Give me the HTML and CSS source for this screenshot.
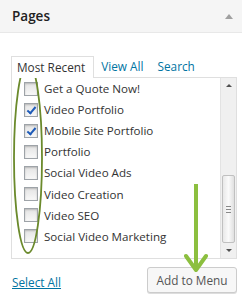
FILE: index.html
```html
<!DOCTYPE html>
<html>
<head>
<meta charset="UTF-8">
<title>Pages</title>
<link rel="stylesheet" href="styles.css">
</head>
<body>
<div class="widget">
  <div class="widget-top">
    <h3>Pages</h3>
    <span class="toggle"></span>
  </div>
  <div class="widget-inside">
    <ul class="tabs">
      <li class="tab active">Most Recent</li>
      <li class="tab"><a href="#">View All</a></li>
      <li class="tab"><a href="#">Search</a></li>
    </ul>
    <div class="panel">
      <ul class="checklist">
        <li><span class="box"></span>Get a Quote Now!</li>
        <li><span class="box checked"></span>Video Portfolio</li>
        <li><span class="box checked"></span>Mobile Site Portfolio</li>
        <li><span class="box"></span>Portfolio</li>
        <li><span class="box"></span>Social Video Ads</li>
        <li><span class="box"></span>Video Creation</li>
        <li><span class="box"></span>Video SEO</li>
        <li><span class="box"></span>Social Video Marketing</li>
      </ul>
      <div class="scrollbar">
        <span class="arrow up"></span>
        <div class="track"><div class="thumb"><span class="grip"></span></div></div>
        <span class="arrow down"></span>
      </div>
    </div>
    <div class="actions">
      <a href="#" class="select-all">Select All</a>
      <button class="add-btn">Add to Menu</button>
    </div>
  </div>

  <!-- annotations drawn over the screenshot -->
  <svg class="mark-ellipse" width="32" height="194" viewBox="0 0 32 194">
    <ellipse cx="16" cy="97" rx="14" ry="95" fill="none" stroke="#6b8a2c" stroke-width="1.8"/>
  </svg>
  <svg class="mark-arrow" width="24" height="92" viewBox="0 0 24 92">
    <line x1="12" y1="0" x2="12" y2="84" stroke="#8cbf3f" stroke-width="4"/>
    <polyline points="2,72 12,86 22,72" fill="none" stroke="#8cbf3f" stroke-width="4" stroke-linejoin="round" stroke-linecap="round"/>
  </svg>
</div>
</body>
</html>
```
FILE: styles.css
```css
body {
  margin: 0;
  font-family: "Open Sans", "Liberation Sans", sans-serif;
  color: #333;
  background-color: #fff;
}
.widget {
  position: relative;
  width: 242px;
  height: 301px;
  overflow: hidden;
}
.widget-top {
  height: 32px;
  background-color: #f5f5f5;
  border-bottom: 1px solid #e8e8e8;
  display: flex;
  align-items: center;
  justify-content: space-between;
  padding: 0 9px 0 12px;
}
.widget-top h3 {
  margin: 0;
  font-size: 13.5px;
  font-weight: 600;
  color: #222;
}
.toggle {
  width: 0;
  height: 0;
  border-left: 4px solid transparent;
  border-right: 4px solid transparent;
  border-bottom: 5px solid #a0a0a0;
}
.widget-inside {
  padding: 23px 5px 0 11px;
}
.tabs {
  list-style: none;
  margin: 0;
  padding: 0;
  display: flex;
  font-size: 11.8px;
  height: 21px;
}
.tab {
  padding: 1px 7px 0 7px;
  line-height: 19px;
}
.tab a {
  color: #0074a2;
  text-decoration: none;
}
.tab.active {
  border: 1px solid #dfdfdf;
  border-bottom: none;
  background-color: #fff;
  position: relative;
  z-index: 1;
  margin-bottom: -1px;
  height: 20px;
  padding: 1px 8px 0 5px;
}
.panel {
  border: 1px solid #dfdfdf;
  height: 180px;
  display: flex;
}
.checklist {
  list-style: none;
  margin: 0;
  padding: 0 0 0 12px;
  flex: 1;
  font-size: 11.6px;
}
.checklist li {
  height: 21.1px;
  display: flex;
  align-items: center;
  white-space: nowrap;
}
.box {
  box-sizing: border-box;
  width: 14px;
  height: 14px;
  border: 1px solid #9ea3a8;
  background: linear-gradient(#e4e4e4, #f8f8f8);
  box-shadow: inset 0 1px 2px rgba(0,0,0,0.2);
  margin-right: 6px;
  position: relative;
  flex-shrink: 0;
}
.box.checked::after {
  content: "";
  position: absolute;
  left: 4px;
  top: 1px;
  width: 3px;
  height: 7px;
  border-right: 2px solid #1e5bb8;
  border-bottom: 2px solid #1e5bb8;
  transform: rotate(40deg);
}
.scrollbar {
  width: 15px;
  background-color: #f0f0f0;
  border-left: 1px solid #e3e3e3;
  display: flex;
  flex-direction: column;
}
.arrow {
  height: 15px;
  display: flex;
  align-items: center;
  justify-content: center;
}
.arrow.up::before {
  content: "";
  border-left: 3px solid transparent;
  border-right: 3px solid transparent;
  border-bottom: 3px solid #505050;
}
.arrow.down::before {
  content: "";
  border-left: 3px solid transparent;
  border-right: 3px solid transparent;
  border-top: 3px solid #505050;
}
.track {
  flex: 1;
  display: flex;
  flex-direction: column;
  justify-content: flex-end;
  padding: 0 1px;
}
.thumb {
  height: 66px;
  background: linear-gradient(to right, #e8e8e8, #fafafa 50%, #e0e0e0);
  border: 1px solid #c0c0c0;
  border-radius: 2px;
  display: flex;
  align-items: center;
  justify-content: center;
}
.grip {
  width: 5px;
  height: 5px;
  border-top: 1px solid #888;
  border-bottom: 1px solid #888;
  position: relative;
}
.grip::after {
  content: "";
  position: absolute;
  left: 0;
  right: 0;
  top: 2px;
  border-top: 1px solid #888;
}
.actions {
  display: flex;
  justify-content: space-between;
  align-items: center;
  padding: 8px 0 0 1px;
}
.select-all {
  font-size: 11.8px;
  color: #0074a2;
  text-decoration: underline;
  margin-top: 3px;
}
.add-btn {
  box-sizing: border-box;
  font-family: "Open Sans", "Liberation Sans", sans-serif;
  font-size: 11.8px;
  color: #555;
  background-color: #f7f7f7;
  border: 1px solid #ccc;
  border-radius: 3px;
  box-shadow: 0 1px 0 #ddd;
  height: 26px;
  width: 90px;
  padding: 0;
  white-space: nowrap;
}
.mark-ellipse {
  position: absolute;
  left: 12px;
  top: 61px;
}
.mark-arrow {
  position: absolute;
  left: 184px;
  top: 184px;
}
```
